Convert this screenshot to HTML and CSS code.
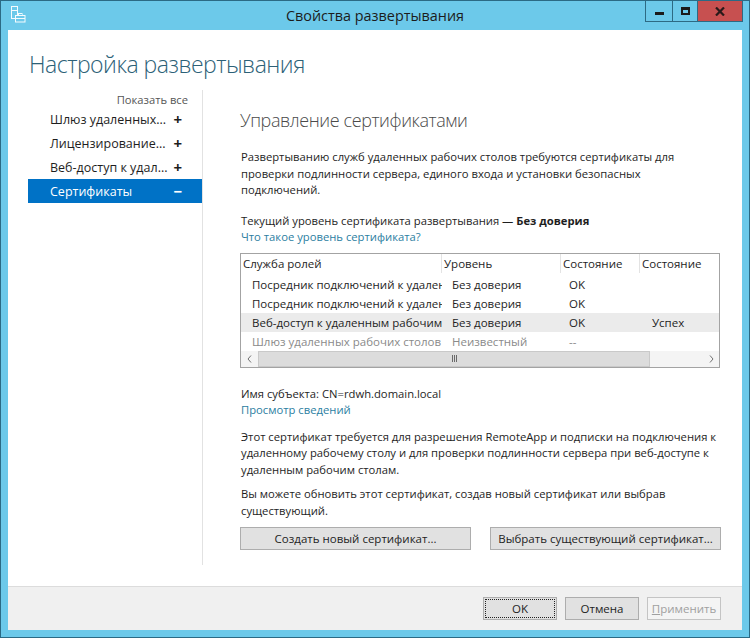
FILE: index.html
```html
<!DOCTYPE html>
<html lang="ru">
<head>
<meta charset="utf-8">
<title>Свойства развертывания</title>
<link rel="stylesheet" href="styles.css">
</head>
<body>
<div class="window">
  <div class="titlebar">
    <svg class="app-icon" width="16" height="17" viewBox="0 0 16 17">
      <rect x="1.5" y="0.5" width="6" height="12" fill="none" stroke="#f4fbfe" stroke-width="1"/>
      <line x1="1.5" y1="4.5" x2="7.5" y2="4.5" stroke="#f4fbfe"/>
      <rect x="5.5" y="9.5" width="9.5" height="6.5" fill="#6cc9ea" stroke="#f4fbfe" stroke-width="1"/>
      <rect x="8.5" y="7.5" width="3.5" height="2" fill="none" stroke="#f4fbfe" stroke-width="1"/>
      <line x1="5.5" y1="12.5" x2="15" y2="12.5" stroke="#f4fbfe"/>
    </svg>
    <div class="title">Свойства развертывания</div>
    <div class="controls">
      <div class="ctl min"><span class="min-glyph"></span></div>
      <div class="ctl max"><span class="max-glyph"></span></div>
      <div class="ctl close">
        <svg width="10" height="9" viewBox="0 0 10 9"><path d="M1 0.5 L9 8.5 M9 0.5 L1 8.5" stroke="#2a1a1a" stroke-width="2.2"/></svg>
      </div>
    </div>
  </div>

  <div class="client">
    <h1 class="page-title">Настройка развертывания</h1>
    <div class="body">
      <nav class="nav">
        <div class="show-all">Показать все</div>
        <div class="nav-item"><span>Шлюз удаленных...</span><span class="sign">+</span></div>
        <div class="nav-item"><span>Лицензирование...</span><span class="sign">+</span></div>
        <div class="nav-item"><span>Веб-доступ к удал...</span><span class="sign">+</span></div>
        <div class="nav-item selected"><span>Сертификаты</span><span class="sign">−</span></div>
      </nav>

      <main class="content">
        <h2 class="section-title">Управление сертификатами</h2>
        <p class="text intro">Развертыванию служб удаленных рабочих столов требуются сертификаты для проверки подлинности сервера, единого входа и установки безопасных подключений.</p>
        <div class="text level">
          <div>Текущий уровень сертификата развертывания — <b>Без доверия</b></div>
          <div class="link">Что такое уровень сертификата?</div>
        </div>

        <div class="grid">
          <div class="grid-head">
            <div class="hcell">Служба ролей</div>
            <div class="hcell">Уровень</div>
            <div class="hcell">Состояние</div>
            <div class="hcell">Состояние</div>
          </div>
          <div class="grid-row">
            <div class="cell c1">Посредник подключений к удален</div>
            <div class="cell c2">Без доверия</div>
            <div class="cell c3">OK</div>
            <div class="cell c4"></div>
          </div>
          <div class="grid-row">
            <div class="cell c1">Посредник подключений к удален</div>
            <div class="cell c2">Без доверия</div>
            <div class="cell c3">OK</div>
            <div class="cell c4"></div>
          </div>
          <div class="grid-row hover">
            <div class="cell c1">Веб-доступ к удаленным рабочим</div>
            <div class="cell c2">Без доверия</div>
            <div class="cell c3">OK</div>
            <div class="cell c4">Успех</div>
          </div>
          <div class="grid-row muted">
            <div class="cell c1">Шлюз удаленных рабочих столов</div>
            <div class="cell c2">Неизвестный</div>
            <div class="cell c3">--</div>
            <div class="cell c4"></div>
          </div>
          <div class="hscroll">
            <div class="arrow">
              <svg width="5" height="8" viewBox="0 0 5 8"><path d="M4 0.5 L1 4 L4 7.5" fill="none" stroke="#707070" stroke-width="1"/></svg>
            </div>
            <div class="track">
              <div class="thumb">
                <svg width="7" height="7" viewBox="0 0 7 7"><path d="M1.5 0 V7 M3.5 0 V7 M5.5 0 V7" stroke="#6a6a6a" stroke-width="1"/></svg>
              </div>
            </div>
            <div class="arrow">
              <svg width="5" height="8" viewBox="0 0 5 8"><path d="M1 0.5 L4 4 L1 7.5" fill="none" stroke="#707070" stroke-width="1"/></svg>
            </div>
          </div>
        </div>

        <div class="text subject">
          <div>Имя субъекта: CN=rdwh.domain.local</div>
          <div class="link">Просмотр сведений</div>
        </div>
        <p class="text desc">Этот сертификат требуется для разрешения RemoteApp и подписки на подключения к удаленному рабочему столу и для проверки подлинности сервера при веб-доступе к удаленным рабочим столам.</p>
        <p class="text renew">Вы можете обновить этот сертификат, создав новый сертификат или выбрав существующий.</p>
        <div class="actions">
          <button class="btn wide">Создать новый сертификат...</button>
          <button class="btn wide">Выбрать существующий сертификат...</button>
        </div>
      </main>
    </div>

    <div class="footer">
      <button class="btn dlg default">OK</button>
      <button class="btn dlg">Отмена</button>
      <button class="btn dlg disabled"><u>П</u>рименить</button>
    </div>
  </div>
</div>
</body>
</html>
```

FILE: styles.css
```css
* { box-sizing: border-box; }

body {
  margin: 0;
  font-family: "Segoe UI", "Open Sans", sans-serif;
  color: #1e1e1e;
}

.window {
  width: 750px;
  height: 638px;
  border: 1px solid #2b6a85;
  background: #6cc9ea;
  display: flex;
  flex-direction: column;
}

/* ---------- title bar ---------- */
.titlebar {
  height: 29px;
  display: grid;
  grid-template-columns: 1fr auto 1fr;
  align-items: center;
}

.app-icon {
  margin-left: 9px;
  margin-top: -3px;
}

.title {
  font-size: 14.4px;
  color: #1c1c1c;
}

.controls {
  justify-self: end;
  align-self: start;
  display: flex;
  height: 21px;
  margin-right: 6px;
  border: 1px solid #2d6a84;
  border-top: 0;
}

.ctl {
  display: flex;
  align-items: center;
  justify-content: center;
}

.ctl + .ctl { border-left: 1px solid #2d6a84; }

.min { width: 26px; }
.max { width: 25px; }
.close { width: 45px; background: #c75050; }

.min-glyph {
  width: 9px;
  height: 3px;
  background: #1b1b1b;
  margin-top: 4px;
}

.max-glyph {
  width: 9px;
  height: 8px;
  border: 2px solid #1b1b1b;
  border-top-width: 3px;
}

/* ---------- client area ---------- */
.client {
  flex: 1;
  margin: 0 7px 7px 7px;
  background: #fff;
  display: flex;
  flex-direction: column;
}

.page-title {
  margin: 0;
  padding: 18px 21px 0;
  font-size: 23px;
  letter-spacing: -0.5px;
  font-weight: 300;
  line-height: 32px;
  color: #2c6177;
}

.body {
  flex: 1;
  display: flex;
  margin: 10px 0 21px;
}

/* ---------- navigation ---------- */
.nav {
  width: 175px;
  margin-left: 20px;
  padding-top: 2px;
  border-right: 1px solid #e2e2e2;
}

.show-all {
  font-size: 11.2px;
  line-height: 15px;
  text-align: right;
  padding-right: 14px;
  color: #555;
}

.nav-item {
  display: flex;
  justify-content: space-between;
  align-items: center;
  height: 24px;
  padding: 0 20px 0 22px;
  font-size: 12.5px;
  color: #1e1e1e;
}

.nav-item .sign {
  font-weight: 700;
  font-size: 15px;
}

.nav-item.selected {
  background: #0072c6;
  color: #fff;
}

/* ---------- content ---------- */
.content {
  flex: 1;
  padding: 0 21px 0 37px;
}

.section-title {
  margin: 18px 0 0;
  font-size: 18px;
  letter-spacing: -0.4px;
  font-weight: 300;
  line-height: 24px;
  color: #4a4a4a;
}

.text {
  font-size: 11.25px;
  line-height: 16.5px;
  margin: 0;
  padding-left: 1px;
}

.text b { font-weight: 700; }

.link { color: #2b7ea1; }

.intro { margin-top: 17px; }
.level { margin-top: 14px; }
.subject { margin-top: 18px; }
.desc { margin-top: 10px; }
.renew { margin-top: 8px; }

/* ---------- grid ---------- */
.grid {
  width: 480px;
  margin-top: 7px;
  border: 1px solid #a3a3a3;
  font-size: 11.5px;
}

.grid-head,
.grid-row {
  display: grid;
  grid-template-columns: 201px 119px 79px 79px;
  height: 19px;
  line-height: 19px;
}

.grid-head { margin-bottom: 2px; }

.hcell {
  padding-left: 2px;
  border-right: 1px solid #e3e3e3;
  white-space: nowrap;
  overflow: hidden;
}

.hcell:last-child { border-right: 0; }

.cell {
  white-space: nowrap;
  overflow: hidden;
}

.c1 { padding-left: 11px; }
.c2 { padding-left: 10px; }
.c3 { padding-left: 8px; }
.c4 { padding-left: 12px; }

.grid-row.hover { background: #ebebeb; }
.grid-row.muted { color: #8a8a8a; }

.hscroll {
  display: flex;
  height: 16px;
  background: #f4f4f4;
}

.arrow {
  width: 16px;
  display: flex;
  align-items: center;
  justify-content: center;
}

.track {
  flex: 1;
  display: flex;
  padding: 0 1px;
}

.thumb {
  width: 392px;
  background: #dcdcdc;
  border: 1px solid #c9c9c9;
  display: flex;
  align-items: center;
  justify-content: center;
}

/* ---------- buttons ---------- */
.btn {
  font-family: inherit;
  font-size: 11.5px;
  color: #1e1e1e;
  height: 23px;
  padding: 0;
  background: #e1e1e1;
  border: 1px solid #adadad;
}

.actions {
  display: flex;
  justify-content: space-between;
  margin-top: 8px;
}

.btn.wide { width: 231px; }

.footer {
  height: 44px;
  border-top: 1px solid #dcdcdc;
  background: #f0f0f0;
  display: flex;
  align-items: center;
  justify-content: flex-end;
  gap: 8px;
  padding-right: 21px;
}

.btn.dlg { width: 74px; }

.btn.default {
  outline: 1px dotted #222;
  outline-offset: -3px;
}

.btn.disabled {
  background: #f4f4f4;
  border-color: #c4c4c4;
  color: #a0a0a0;
}
```
